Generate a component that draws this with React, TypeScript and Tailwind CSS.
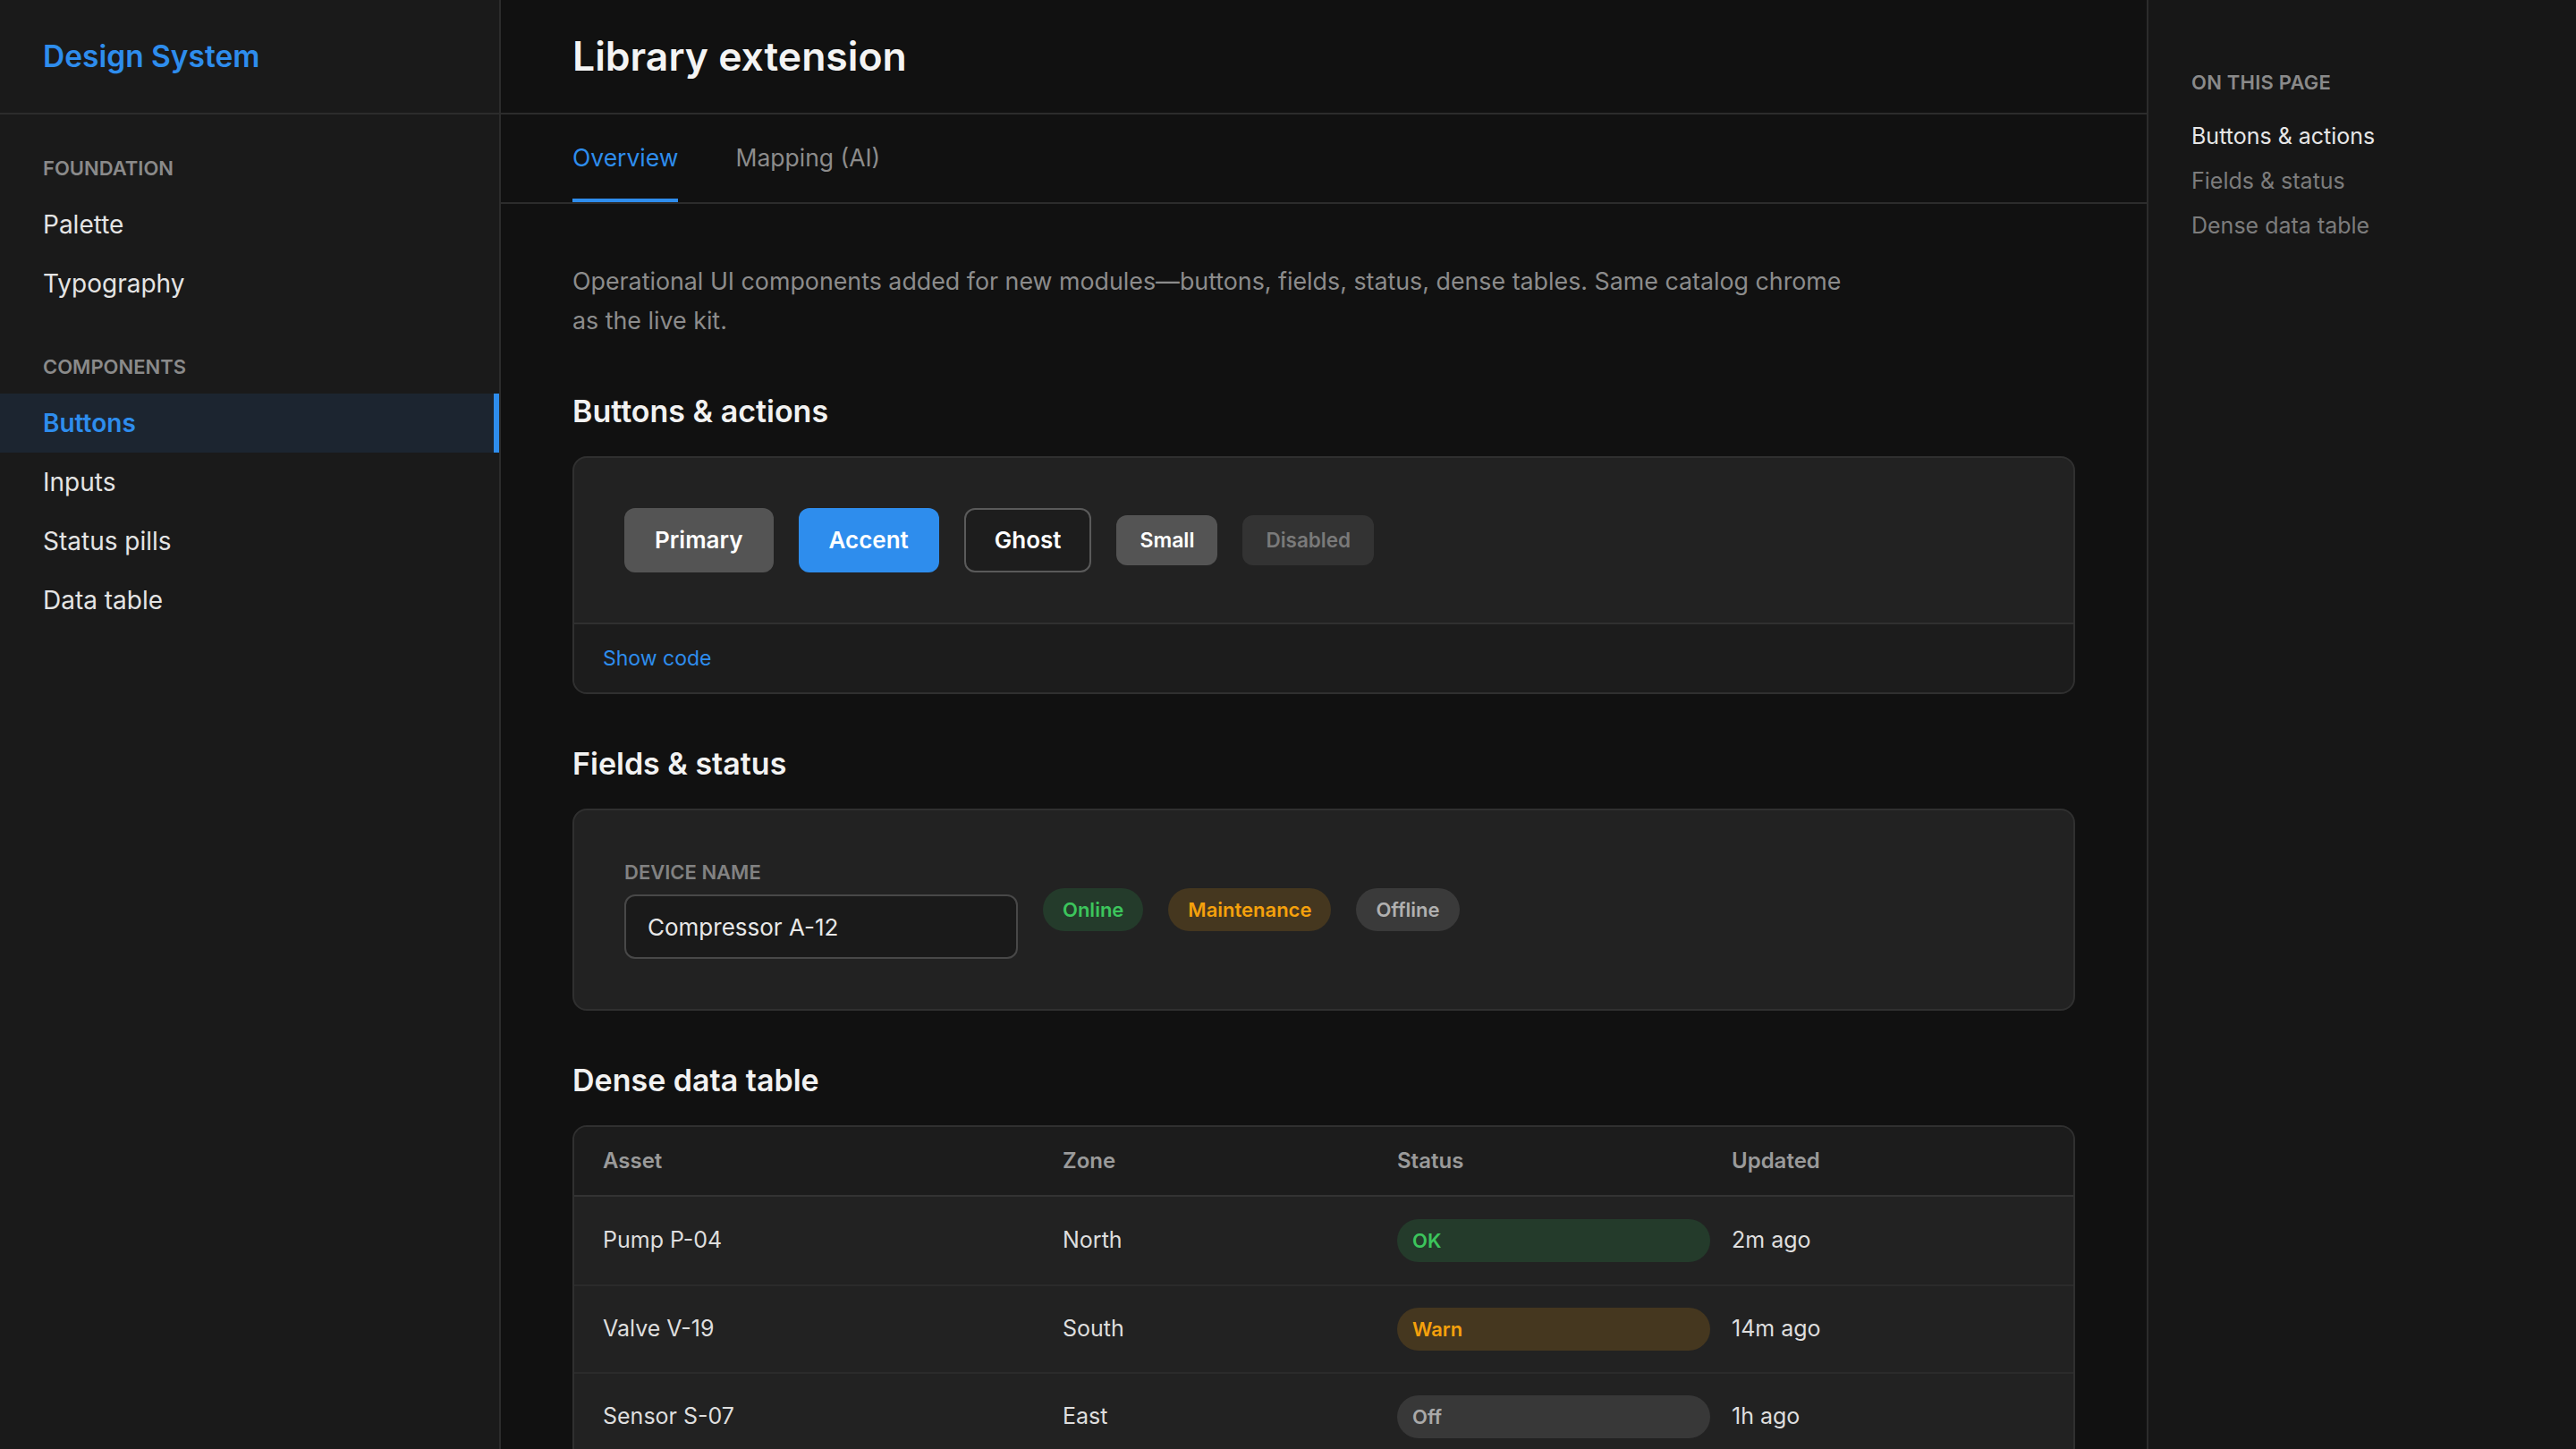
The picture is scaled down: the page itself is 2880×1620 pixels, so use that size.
import React from "react";

const foundation = ["Palette", "Typography"];
const components = ["Buttons", "Inputs", "Status pills", "Data table"];

const rows = [
  { asset: "Pump P-04", zone: "North", status: "OK", tone: "ok", updated: "2m ago" },
  { asset: "Valve V-19", zone: "South", status: "Warn", tone: "warn", updated: "14m ago" },
  { asset: "Sensor S-07", zone: "East", status: "Off", tone: "off", updated: "1h ago" },
];

const toneClass: Record<string, string> = {
  ok: "bg-[#243b2b] text-[#3cc55c]",
  warn: "bg-[#45371f] text-[#f5a10c]",
  off: "bg-[#383838] text-[#a9a9a9]",
};

function NavSection({ title, items, active }: { title: string; items: string[]; active?: string }) {
  return (
    <div>
      <div className="mb-[14px] px-12 text-[22px] leading-8 font-semibold uppercase text-[#8a8a8a]">{title}</div>
      <ul>
        {items.map((item) =>
          item === active ? (
            <li
              key={item}
              className="flex h-[66px] items-center border-r-[6px] border-[#2e8ded] bg-[#1c2530] px-12 text-[28px] font-semibold text-[#2e8ded]"
            >
              {item}
            </li>
          ) : (
            <li key={item} className="flex h-[66px] items-center px-12 text-[28px] text-[#e4e4e4]">
              {item}
            </li>
          )
        )}
      </ul>
    </div>
  );
}

function SectionTitle({ first, children }: { first?: boolean; children: React.ReactNode }) {
  return (
    <h2
      className={`${first ? "mt-[52px]" : "mt-[50px]"} mb-[22px] text-[34px] leading-[56px] font-semibold text-[#f2f2f2]`}
    >
      {children}
    </h2>
  );
}

const btn = "rounded-xl border-2 px-8 py-[14px] text-[26px] leading-10 font-semibold";
const btnSm = "rounded-xl border-2 border-transparent px-6 py-[10px] leading-8 font-semibold";
const pill = "rounded-full px-[22px] py-2 text-[22px] leading-8 font-semibold";

export default function App() {
  return (
    <div className="flex h-screen overflow-hidden bg-[#111111] font-['Inter',sans-serif] text-[#e6e6e6]">
      {/* left nav */}
      <aside className="w-[560px] shrink-0 border-r-2 border-[#2c2c2c] bg-[#1a1a1a]">
        <div className="flex h-32 items-center border-b-2 border-[#2c2c2c] px-12">
          <span className="text-[33.5px] font-semibold text-[#2e8ded]">Design System</span>
        </div>
        <nav className="flex flex-col gap-[44px] pt-[44px]">
          <NavSection title="Foundation" items={foundation} />
          <NavSection title="Components" items={components} active="Buttons" />
        </nav>
      </aside>

      {/* main column */}
      <main className="min-w-0 flex-1 overflow-hidden">
        <header className="flex h-32 items-center border-b-2 border-[#2c2c2c] px-20">
          <h1 className="text-[44.5px] font-semibold text-[#f4f4f4]">Library extension</h1>
        </header>

        <div className="flex h-[100px] gap-16 border-b-2 border-[#2c2c2c] px-20">
          <span className="flex items-center border-b-4 border-[#2e8ded] pt-[4px] text-[26.5px] text-[#2e8ded]">Overview</span>
          <span className="flex items-center border-b-4 border-transparent pt-[4px] text-[26.5px] text-[#8c8c8c]">
            Mapping (AI)
          </span>
        </div>

        <div className="px-20 pt-16">
          <p className="max-w-[1446px] text-[26.8px] leading-[44px] text-[#8c8c8c]">
            Operational UI components added for new modules—buttons, fields, status, dense tables. Same catalog chrome
            as the live kit.
          </p>

          <SectionTitle first>Buttons &amp; actions</SectionTitle>
          <div className="overflow-hidden rounded-2xl border-2 border-[#303030] bg-[#222222]">
            <div className="flex items-center gap-7 p-14">
              <button className={`${btn} border-transparent bg-[#545454] text-white`}>Primary</button>
              <button className={`${btn} border-transparent bg-[#2e8ded] text-white`}>Accent</button>
              <button className={`${btn} border-[#5a5a5a] bg-[#1d1d1d] text-white`}>Ghost</button>
              <button className={`${btnSm} bg-[#545454] text-[23px] text-white`}>Small</button>
              <button className={`${btnSm} bg-[#333333] text-[22.5px] text-[#7a7a7a]`}>Disabled</button>
            </div>
            <div className="border-t-2 border-[#303030] bg-[#1c1c1c] px-8 py-[22px] text-[23px] leading-8 text-[#2e8ded]">
              Show code
            </div>
          </div>

          <SectionTitle>Fields &amp; status</SectionTitle>
          <div className="flex items-center gap-7 rounded-2xl border-2 border-[#303030] bg-[#222222] p-14">
            <label className="flex flex-col">
              <span className="mb-3 text-[22px] leading-[26px] font-semibold uppercase text-[#828282]">Device name</span>
              <input
                readOnly
                value="Compressor A-12"
                className="h-[72px] w-[440px] rounded-xl border-2 border-[#484848] bg-[#1a1a1a] px-6 text-[26px] text-[#e8e8e8] outline-none"
              />
            </label>
            <span className={`${pill} bg-[#243b2b] text-[#3cc55c]`}>Online</span>
            <span className={`${pill} bg-[#45371f] text-[#f5a10c]`}>Maintenance</span>
            <span className={`${pill} bg-[#3a3a3a] text-[#b0b0b0]`}>Offline</span>
          </div>

          <SectionTitle>Dense data table</SectionTitle>
          <div className="overflow-hidden rounded-2xl border-2 border-[#303030] bg-[#222222]">
            <div className="grid h-[78px] grid-cols-[1.4fr_1fr_1fr_1fr] items-center gap-6 border-b-2 border-[#333333] bg-[#1c1c1c] px-8 text-[24px] font-semibold text-[#9a9a9a]">
              <span>Asset</span>
              <span>Zone</span>
              <span>Status</span>
              <span>Updated</span>
            </div>
            {rows.map((r, i) => (
              <div
                key={r.asset}
                className={`grid h-[98px] grid-cols-[1.4fr_1fr_1fr_1fr] items-center gap-6 px-8 text-[25px] text-[#dedede] ${
                  i > 0 ? "border-t-2 border-[#2b2b2b]" : ""
                }`}
              >
                <span>{r.asset}</span>
                <span>{r.zone}</span>
                <span className={`block rounded-full px-[17px] py-2 text-[22px] leading-8 font-semibold ${toneClass[r.tone]}`}>
                  {r.status}
                </span>
                <span>{r.updated}</span>
              </div>
            ))}
          </div>
        </div>
      </main>

      {/* on this page */}
      <aside className="w-[480px] shrink-0 border-l-2 border-[#2c2c2c] bg-[#171717] pt-[76px] pl-12">
        <div className="mb-[24px] text-[22px] leading-8 font-semibold uppercase tracking-[0.01em] text-[#8a8a8a]">
          On this page
        </div>
        <ul className="flex flex-col gap-[10px] text-[25px] leading-10">
          <li className="text-[#e6e6e6]">Buttons &amp; actions</li>
          <li className="text-[#7c7c7c]">Fields &amp; status</li>
          <li className="text-[#7c7c7c]">Dense data table</li>
        </ul>
      </aside>
    </div>
  );
}
